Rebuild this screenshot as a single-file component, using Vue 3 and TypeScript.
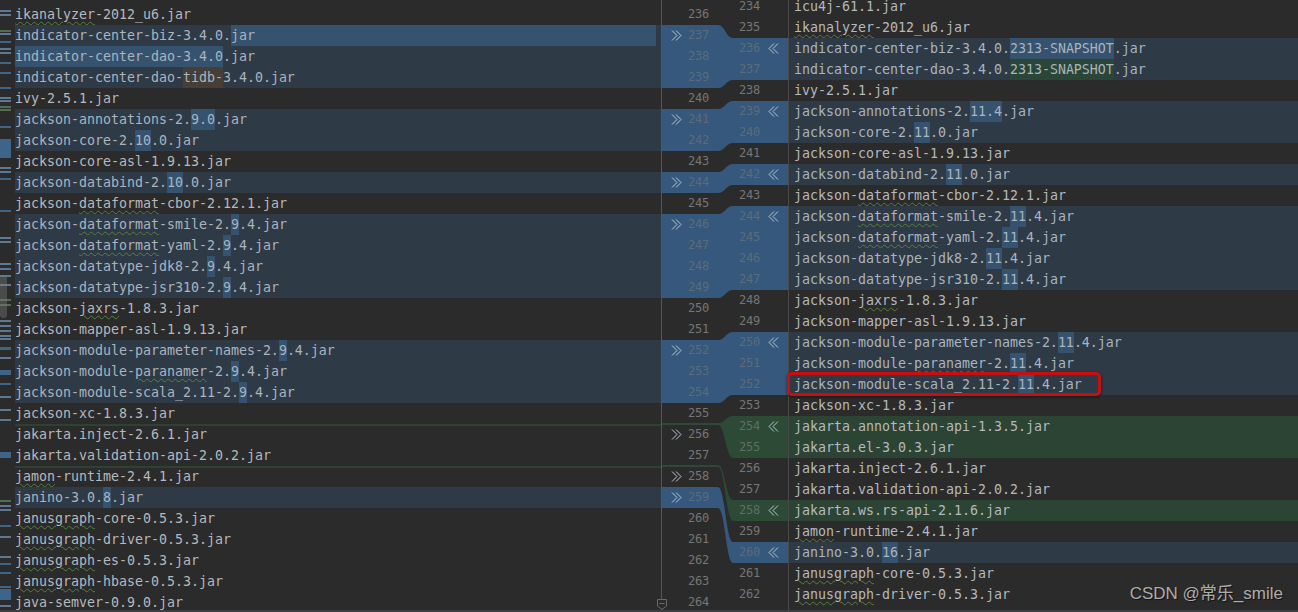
<script setup lang="ts">
type Seg = { text: string; cls: string }
type Row = { segs: Seg[]; kind: string; boxed: boolean; fill: boolean }

function parse(t: string): Seg[] {
  const parts = t.split(/(\[[^\]]*\]|\{[^}]*\}|<[^>]*>|\([^)]*\)|\|)/).filter((p) => p !== '')
  return parts.map((p) => {
    if (p === '|') return { text: '', cls: 'caret' }
    const inner = p.slice(1, -1)
    if (p[0] === '[') return { text: inner, cls: 'hl' }
    if (p[0] === '{') return { text: inner, cls: 'sq' }
    if (p[0] === '<') return { text: inner, cls: 'hlg' }
    if (p[0] === '(') return { text: inner, cls: 'hlb' }
    return { text: p, cls: '' }
  })
}

function rows(src: [string, string?][]): Row[] {
  return src.map(([t, kind]) => ({
    segs: parse(t),
    kind: (kind ?? '').replace('!', '').replace('*', ''),
    boxed: (kind ?? '').includes('!'),
    fill: (kind ?? '').includes('*'),
  }))
}

const leftRows = rows([
  ['{ikanalyzer}-2012_u6.jar'],
  ['indicator-center-biz-3.4.0.[jar]', 'm*'],
  ['[indicator-center-dao-3.4.0].jar', 'm'],
  ['indicator-center-dao-(tidb-)3.4.0.jar', 'm'],
  ['ivy-2.5.1.jar'],
  ['jackson-annotations-2.[9.0].jar', 'm'],
  ['jackson-core-2.[10].0.jar', 'm'],
  ['jackson-core-asl-1.9.13.jar'],
  ['jackson-databind-2.[10].0.jar', 'm'],
  ['jackson-{dataformat}-cbor-2.12.1.jar'],
  ['jackson-{dataformat}-smile-2.[9].4.jar', 'm'],
  ['jackson-{dataformat}-yaml-2.[9].4.jar', 'm'],
  ['jackson-datatype-jdk8-2.[9].4.jar', 'm'],
  ['jackson-datatype-jsr310-2.[9].4.jar', 'm'],
  ['jackson-{jaxrs}-1.8.3.jar'],
  ['jackson-mapper-asl-1.9.13.jar'],
  ['jackson-module-parameter-names-2.[9].4.jar', 'm'],
  ['jackson-module-{paranamer}-2.[9].4.jar', 'm'],
  ['jackson-module-scala_2.11-2.[9].4.jar', 'm'],
  ['jackson-xc-1.8.3.jar'],
  ['jakarta.inject-2.6.1.jar', 't'],
  ['jakarta.validation-api-2.0.2.jar'],
  ['{jamon}-runtime-2.4.1.jar', 't'],
  ['janino-3.0.[8].jar', 'm'],
  ['{janusgraph}-core-0.5.3.jar'],
  ['{janusgraph}-driver-0.5.3.jar'],
  ['{janusgraph}-es-0.5.3.jar'],
  ['{janusgraph}-hbase-0.5.3.jar'],
  ['java-semver-0.9.0.jar'],
])

const rightRows = rows([
  ['icu4j-61.1.jar'],
  ['{ikanalyzer}-2012_u6.jar'],
  ['indicator-center-biz-3.4.0.[2313-SNAPSHOT].jar', 'm'],
  ['indicator-center-dao-|3.4.0.<2313-SNAPSHOT>.jar', 'm'],
  ['ivy-2.5.1.jar'],
  ['jackson-annotations-2.[11.4].jar', 'm'],
  ['jackson-core-2.[11].0.jar', 'm'],
  ['jackson-core-asl-1.9.13.jar'],
  ['jackson-databind-2.[11].0.jar', 'm'],
  ['jackson-{dataformat}-cbor-2.12.1.jar'],
  ['jackson-{dataformat}-smile-2.[11].4.jar', 'm'],
  ['jackson-{dataformat}-yaml-2.[11].4.jar', 'm'],
  ['jackson-datatype-jdk8-2.[11].4.jar', 'm'],
  ['jackson-datatype-jsr310-2.[11].4.jar', 'm'],
  ['jackson-{jaxrs}-1.8.3.jar'],
  ['jackson-mapper-asl-1.9.13.jar'],
  ['jackson-module-parameter-names-2.[11].4.jar', 'm'],
  ['jackson-module-{paranamer}-2.[11].4.jar', 'm'],
  ['jackson-module-scala_2.11-2.[11].4.jar', 'm!'],
  ['jackson-xc-1.8.3.jar'],
  ['jakarta.annotation-api-1.3.5.jar', 'g'],
  ['jakarta.el-3.0.3.jar', 'g'],
  ['jakarta.inject-2.6.1.jar'],
  ['jakarta.validation-api-2.0.2.jar'],
  ['jakarta.ws.rs-api-2.1.6.jar', 'g'],
  ['{jamon}-runtime-2.4.1.jar'],
  ['janino-3.0.[16].jar', 'm'],
  ['{janusgraph}-core-0.5.3.jar'],
  ['{janusgraph}-driver-0.5.3.jar'],
])

const leftArrows = new Set([237, 241, 244, 246, 252, 256, 258, 259])
const rightArrows = new Set([236, 239, 242, 244, 250, 254, 258, 260])
const leftBand = (n: number) =>
  (n >= 237 && n <= 239) || (n >= 241 && n <= 242) || n === 244 || (n >= 246 && n <= 249) || (n >= 252 && n <= 254) || n === 259
const rightBand = (n: number) =>
  (n >= 236 && n <= 237) || (n >= 239 && n <= 240) || n === 242 || (n >= 244 && n <= 247) || (n >= 250 && n <= 252) || n === 260
const rightGreen = (n: number) => n === 254 || n === 255 || n === 258

const leftNums = leftRows.map((_, i) => {
  const n = 236 + i
  return { n, arrow: leftArrows.has(n), cls: leftBand(n) ? 'dim' : '' }
})
const rightNums = rightRows.map((_, i) => {
  const n = 234 + i
  return { n, arrow: rightArrows.has(n), cls: rightBand(n) ? 'dim' : rightGreen(n) ? 'dimg' : '' }
})

function band(y1: number, y2: number, y3: number, y4: number): string {
  return `M0 ${y1}H57C64 ${y1} 65 ${y3} 72 ${y3}H128V${y4}H72C65 ${y4} 64 ${y2} 57 ${y2}H0Z`
}
const blueBands = [
  band(25, 88, 38, 80),
  band(109, 151, 101, 143),
  band(172, 193, 164, 185),
  band(214, 298, 206, 290),
  band(340, 403, 332, 395),
  band(487, 508, 542, 563),
]
const greenBands = [band(423, 425, 416, 458), band(465, 467, 500, 521)]

const marks: { y: number; h: number; c: string }[] = [
  [10, 2, 'l'], [14, 2, 'l'], [30, 2, 'g'], [33, 2, 'l'], [41, 2, 'b'], [48, 2, 'l'], [52, 2, 'l'], [62, 2, 'b'],
  [72, 2, 'b'], [87, 2, 'b'], [97, 2, 'l'], [100, 2, 'l'], [106, 2, 'g'], [109, 2, 'g'], [126, 2, 'b'],
  [139, 19, 'b'], [167, 2, 'l'], [171, 2, 'l'], [178, 2, 'b'], [210, 2, 'b'], [237, 2, 'l'], [241, 2, 'l'],
  [263, 2, 'l'], [268, 2, 'l'], [275, 2, 'l'], [284, 2, 'l'], [299, 2, 'g'], [304, 2, 'g'],
  [320, 2, 'l'], [325, 2, 'l'], [330, 2, 'l'], [335, 2, 'l'], [338, 2, 'l'], [347, 3, 'b'], [357, 2, 'l'],
  [370, 5, 'b'], [383, 2, 'b'], [396, 2, 'l'], [409, 2, 'l'], [419, 2, 'l'], [452, 6, 'b'], [500, 2, 'g'],
  [505, 2, 'l'], [509, 2, 'l'], [525, 2, 'b'], [536, 2, 'l'], [556, 2, 'l'], [563, 2, 'b'], [572, 2, 'b'],
  [586, 2, 'b'], [589, 11, 'b'], [605, 2, 'l'],
].map(([y, h, c]) => ({ y: y as number, h: h as number, c: c as string }))
</script>

<template>
  <div class="page">
    <main class="diff">
      <section class="left">
        <div class="stripes">
          <div v-for="(m, i) in marks" :key="i" class="mark" :class="m.c" :style="{ top: m.y + 'px', height: m.h + 'px' }"></div>
          <div class="thumb"></div>
        </div>
        <div class="lines lines-left">
          <div v-for="(r, i) in leftRows" :key="i" class="row" :class="[r.kind, { fill: r.fill }]">
            <template v-for="(s, j) in r.segs" :key="j">
              <span :class="s.cls">{{ s.text }}</span>
            </template>
          </div>
        </div>
      </section>

      <section class="center">
        <svg class="bands" width="128" height="610" viewBox="0 0 128 610">
          <path v-for="d in blueBands" :key="d" :d="d" fill="#35587c" />
          <path v-for="d in greenBands" :key="d" :d="d" fill="#2c4a36" />
          <path d="M0.5 0V610" stroke="#565656" fill="none" />
          <path d="M127.5 0V610" stroke="#484848" fill="none" />
          <path d="M-3.5 599.5h9v6.5l-4.5 3.5l-4.5-3.5zM-1.5 603.5h5" stroke="#6a6a6a" fill="#2b2b2b" />
        </svg>
        <div class="nums nums-left">
          <div v-for="l in leftNums" :key="l.n" class="num-row">
            <span class="arrow-box">
              <svg v-if="l.arrow" width="11" height="11" viewBox="0 0 11 11">
                <path d="M1 .5L6 5.5L1 10.5M5 .5L10 5.5L5 10.5" fill="none" stroke="#b9c6d3" stroke-width="1" />
              </svg>
            </span>
            <span class="num" :class="l.cls">{{ l.n }}</span>
          </div>
        </div>
        <div class="nums nums-right">
          <div v-for="l in rightNums" :key="l.n" class="num-row">
            <span class="num" :class="l.cls">{{ l.n }}</span>
            <span class="arrow-box-r">
              <svg v-if="l.arrow" width="11" height="11" viewBox="0 0 11 11">
                <path d="M6 .5L1 5.5L6 10.5M10 .5L5 5.5L10 10.5" fill="none" stroke="#b9c6d3" stroke-width="1" />
              </svg>
            </span>
          </div>
        </div>
      </section>

      <section class="right">
        <div class="lines lines-right">
          <div v-for="(r, i) in rightRows" :key="i" class="row" :class="r.kind">
            <template v-for="(s, j) in r.segs" :key="j">
              <span :class="s.cls">{{ s.text }}</span>
            </template>
            <div v-if="r.boxed" class="redbox"></div>
          </div>
        </div>
        <div class="watermark">CSDN @常乐_smile</div>
      </section>
    </main>
    <footer class="foot"></footer>
  </div>
</template>

<style>
html, body { background: #2b2b2b; }
</style>

<style scoped>
.page {
  width: 1298px;
  height: 612px;
  display: flex;
  flex-direction: column;
  overflow: hidden;
  background: #2b2b2b;
  font-family: "DejaVu Sans Mono", "Liberation Mono", monospace;
}
.diff {
  flex: 1;
  min-height: 0;
  display: flex;
  overflow: hidden;
}
.foot {
  height: 2px;
  background: #3b3d3f;
}
.left {
  width: 661px;
  flex: none;
  display: flex;
}
.stripes {
  width: 15px;
  flex: none;
  position: relative;
}
.mark {
  position: absolute;
  left: 0;
  width: 11px;
}
.mark.b { background: #3d6589; }
.mark.l { background: #5d7890; }
.mark.g { background: #4f6f50; }
.thumb {
  position: absolute;
  left: 0;
  top: 275px;
  width: 7px;
  height: 43px;
  border-radius: 3px;
  background: rgba(125, 125, 125, 0.4);
}
.lines {
  flex: 1;
  min-width: 0;
  font-size: 13.29px;
  color: #b4b9be;
}
.lines-left { padding-top: 4px; }
.lines-right { margin-top: -4px; }
.row {
  height: 21px;
  line-height: 21px;
  display: flex;
  white-space: pre;
  position: relative;
}
.lines-right .row { padding-left: 5px; }
.row.m { background: #2f3a47; color: #a9b4bf; }
.row.g { background: #2c4433; }
.row.t { box-shadow: inset 0 2px 0 #2d4332; }
.row.fill span:last-child {
  flex: 1;
  margin-right: 5px;
}
.hl { background: #35526f; }
.hlg { background: #2a4637; }
.hlb { background: #453f38; }
.sq {
  text-decoration: underline wavy #55803f 1px;
  text-underline-offset: 2px;
}
.caret {
  width: 0;
  box-shadow: 1px 0 0 #6a665a;
}
.redbox {
  position: absolute;
  left: -2px;
  top: -2px;
  width: 308px;
  height: 18px;
  border: 3px solid #c80f10;
  border-radius: 5px;
  box-shadow: 0 1px 3px rgba(0, 0, 0, 0.5);
}
.center {
  width: 128px;
  flex: none;
  display: flex;
  position: relative;
}
.bands {
  position: absolute;
  left: 0;
  top: 0;
  overflow: visible;
}
.nums {
  position: relative;
  font-size: 12px;
  letter-spacing: -0.22px;
  color: #767676;
}
.nums-left {
  width: 78px;
  flex: none;
  padding-top: 4px;
}
.nums-right {
  flex: 1;
  margin-top: -4px;
}
.num-row {
  height: 21px;
  line-height: 21px;
  display: flex;
  align-items: center;
}
.num.dim { color: #5c6b7a; }
.num.dimg { color: #5d7060; }
.arrow-box {
  width: 27px;
  padding-left: 10px;
  box-sizing: border-box;
  display: flex;
}
.arrow-box-r {
  margin-left: 8px;
  display: flex;
}
.right {
  flex: 1;
  min-width: 0;
  position: relative;
}
.watermark {
  position: absolute;
  right: 15px;
  top: 582px;
  font-family: "Liberation Sans", "Noto Sans CJK SC", sans-serif;
  font-size: 17px;
  line-height: 24px;
  color: #adadad;
  text-shadow: 1px 1px 1px rgba(0, 0, 0, 0.6);
  white-space: nowrap;
}
</style>
